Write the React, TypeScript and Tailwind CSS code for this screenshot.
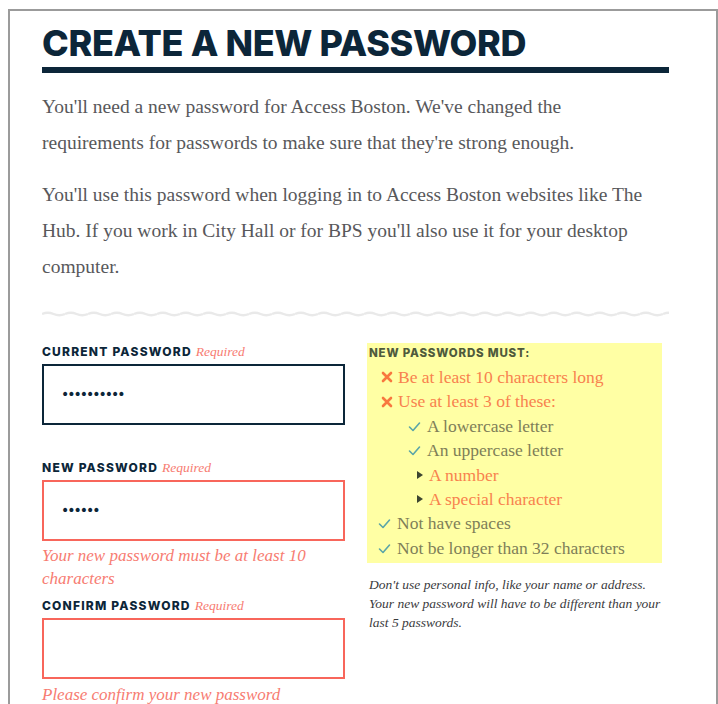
import React from "react";

const serif = { fontFamily: '"Liberation Serif", "DejaVu Serif", serif' };
const sans = { fontFamily: 'Inter, "Liberation Sans", sans-serif' };

function Cross() {
  return (
    <svg width="12" height="12" viewBox="0 0 12 12" className="shrink-0">
      <path d="M2 2 L10 10 M10 2 L2 10" stroke="#f8783f" strokeWidth="2.6" strokeLinecap="round" />
    </svg>
  );
}

function Check() {
  return (
    <svg width="13" height="11" viewBox="0 0 13 11" className="shrink-0">
      <path d="M1.5 6 L5 9.5 L11.5 2" stroke="#5aa5a8" strokeWidth="1.6" fill="none" strokeLinecap="round" strokeLinejoin="round" />
    </svg>
  );
}

function Arrow() {
  return (
    <svg width="8" height="10" viewBox="0 0 8 10" className="shrink-0">
      <path d="M1 1 L7 5 L1 9 Z" fill="#3d4530" />
    </svg>
  );
}

function Wave() {
  return (
    <svg width="627" height="8" viewBox="0 0 627 8" className="block">
      <defs>
        <pattern id="wv" width="23" height="8" patternUnits="userSpaceOnUse">
          <path d="M0 4 Q5.75 1.5 11.5 4 T23 4" stroke="#e9e9e9" strokeWidth="2.4" fill="none" />
        </pattern>
      </defs>
      <rect width="627" height="8" fill="url(#wv)" />
    </svg>
  );
}

function Label({ text }: { text: string }) {
  return (
    <div className="flex items-baseline gap-[4px]">
      <span style={sans} className="text-[12px] font-extrabold tracking-[0.1em] text-[#0c2639]">
        {text}
      </span>
      <span style={serif} className="text-[13.5px] italic text-[#f77c72]">
        Required
      </span>
    </div>
  );
}

function Dots({ n }: { n: number }) {
  return (
    <span className="text-[14px] tracking-[-2px] text-[#0c2639]" style={{ fontFamily: '"DejaVu Sans", sans-serif' }}>
      {"•".repeat(n)}
    </span>
  );
}

export default function App() {
  return (
    <div className="bg-white pl-[8px] pt-[9px] w-[718px] h-[704px] overflow-hidden">
      <div className="border-2 border-[#9b9b9b] h-[760px] pl-[32px] pt-[12px]">
        <h1 style={sans} className="text-[36px] leading-[40px] font-extrabold tracking-[-0.01em] text-[#0c2639]">
          CREATE A NEW PASSWORD
        </h1>
        <div className="w-[627px] h-[6px] bg-[#0c2639] mt-[4px]" />
        <div style={serif} className="text-[19.5px] leading-[36px] text-[#58585b] w-[612px] mt-[16px]">
          <p>You'll need a new password for Access Boston. We've changed the requirements for passwords to make sure that they're strong enough.</p>
          <p className="mt-[16px]">
            You'll use this password when logging in to Access Boston websites like The Hub. If you work in City Hall or for BPS you'll also use it for your desktop computer.
          </p>
        </div>
        <div className="mt-[25px]">
          <Wave />
        </div>
        <div className="flex gap-[22px] mt-[24px]">
          <div className="w-[303px]">
            <Label text="CURRENT PASSWORD" />
            <div className="mt-[2px] h-[61px] border-2 border-[#0c2639] flex items-center pl-[17px]">
              <Dots n={10} />
            </div>
            <div className="mt-[33px]">
              <Label text="NEW PASSWORD" />
            </div>
            <div className="mt-[1px] h-[61px] border-2 border-[#f8665b] flex items-center pl-[17px]">
              <Dots n={6} />
            </div>
            <p style={serif} className="italic text-[17px] leading-[23px] text-[#f77c72] mt-[3px] pr-[20px]">
              Your new password must be at least 10 characters
            </p>
            <div className="mt-[6px]">
              <Label text="CONFIRM PASSWORD" />
            </div>
            <div className="mt-[2px] h-[61px] border-2 border-[#f8665b]" />
            <p style={serif} className="italic text-[17px] leading-[23px] text-[#f77c72] mt-[4px]">
              Please confirm your new password
            </p>
          </div>
          <div className="w-[295px] pt-[1px]">
            <div className="bg-[#ffffa4] pt-[2px] pb-[3px] pl-[2px]">
              <div style={sans} className="text-[11.5px] font-extrabold tracking-[0.07em] text-[#4f5a3c] leading-[16px]">
                NEW PASSWORDS MUST:
              </div>
              <ul style={serif} className="text-[17.5px] leading-[24.4px] mt-[4px]">
                <li className="flex items-center gap-[5px] pl-[12px] text-[#f8824e]">
                  <Cross />
                  <span>Be at least 10 characters long</span>
                </li>
                <li className="flex items-center gap-[5px] pl-[12px] text-[#f8824e]">
                  <Cross />
                  <span>Use at least 3 of these:</span>
                </li>
                <li className="flex items-center gap-[6px] pl-[39px] text-[#7e7e58]">
                  <Check />
                  <span>A lowercase letter</span>
                </li>
                <li className="flex items-center gap-[6px] pl-[39px] text-[#7e7e58]">
                  <Check />
                  <span>An uppercase letter</span>
                </li>
                <li className="flex items-center gap-[5px] pl-[47px] text-[#f8824e]">
                  <Arrow />
                  <span>A number</span>
                </li>
                <li className="flex items-center gap-[5px] pl-[47px] text-[#f8824e]">
                  <Arrow />
                  <span>A special character</span>
                </li>
                <li className="flex items-center gap-[6px] pl-[9px] text-[#7e7e58]">
                  <Check />
                  <span>Not have spaces</span>
                </li>
                <li className="flex items-center gap-[6px] pl-[9px] text-[#7e7e58]">
                  <Check />
                  <span>Not be longer than 32 characters</span>
                </li>
              </ul>
            </div>
            <p style={serif} className="italic text-[13.5px] leading-[19px] text-[#3a3a3d] mt-[12px] pl-[2px]">
              Don't use personal info, like your name or address.
              <br />
              Your new password will have to be different than your last 5 passwords.
            </p>
          </div>
        </div>
      </div>
    </div>
  );
}
